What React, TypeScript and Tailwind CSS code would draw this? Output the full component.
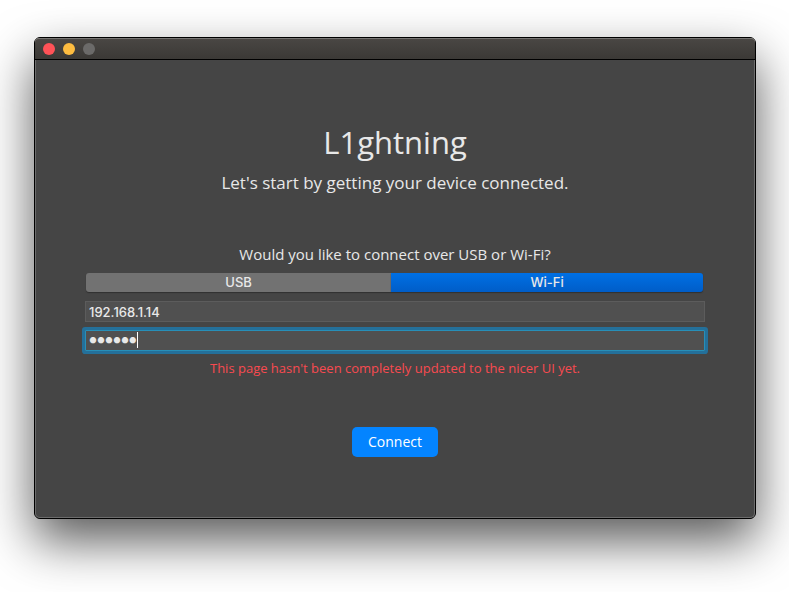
import { useState } from "react";

type Mode = "usb" | "wifi";

const DOT_WIDTH = 8;

function TitleBar() {
  return (
    <header className="flex h-[22px] items-center gap-2 rounded-t-[4px] border-b border-black bg-linear-to-b from-[#4a4744] to-[#3b3936] px-2 shadow-[inset_0_1px_0_#777573]">
      <button type="button" aria-label="Close" className="size-3 rounded-full bg-[#ff5257]" />
      <button type="button" aria-label="Minimize" className="size-3 rounded-full bg-[#fdbc40]" />
      <button type="button" aria-label="Zoom" disabled className="size-3 rounded-full bg-[#6b6a69]" />
    </header>
  );
}

export default function App() {
  const [mode, setMode] = useState<Mode>("wifi");
  const [host, setHost] = useState("192.168.1.14");
  const [password, setPassword] = useState("alpine");

  return (
    <div className="min-h-screen bg-white pt-[37px] pr-[33px] pb-[73px] pl-[34px] font-['Open_Sans',sans-serif] text-[#e8e8e8]">
      <div className="rounded-[6px] border border-black bg-[#454545] shadow-[0_22px_50px_rgba(0,0,0,0.65)]">
        <TitleBar />
        <main className="flex flex-col items-center rounded-b-[5px] border-x border-b border-[#6c6c6c] px-[49px] pt-[60px] pb-[60px]">
          <h1 className="text-[31px] leading-[44px]">L1ghtning</h1>
          <p className="mt-[7px] text-[17px] leading-6">Let's start by getting your device connected.</p>

          <form className="mt-[49px] flex w-full flex-col items-center" onSubmit={(e) => e.preventDefault()}>
            <p id="mode" className="text-[15px] leading-5">Would you like to connect over USB or Wi-Fi?</p>
            <div
              role="group"
              aria-labelledby="mode"
              className="mt-[9px] flex h-[19px] w-full pr-0.5 pl-px font-[Inter,sans-serif] text-[13px] leading-[19px] font-medium"
            >
              <button
                type="button"
                aria-pressed={mode === "usb"}
                onClick={() => setMode("usb")}
                className="flex-auto rounded-l-[3px] bg-[#727272] shadow-[0_1px_1px_#303030] aria-pressed:bg-[#0068da]"
              >
                USB
              </button>
              <button
                type="button"
                aria-pressed={mode === "wifi"}
                onClick={() => setMode("wifi")}
                className="flex-auto rounded-r-[3px] bg-[#727272] shadow-[0_1px_1px_#303030] aria-pressed:bg-linear-to-b aria-pressed:from-[#0070e4] aria-pressed:to-[#005dc8]"
              >
                Wi-Fi
              </button>
            </div>
            <input
              type="text"
              aria-label="IP address"
              value={host}
              onChange={(e) => setHost(e.target.value)}
              className="mt-[9px] h-[21px] w-full border border-[#5c5c5c] bg-[#505050] px-[3px] font-[Inter,sans-serif] text-[13px] leading-4 font-medium outline-none"
            />
            <div className="relative mt-2 h-[21px] w-full">
              <input
                type="password"
                aria-label="Password"
                autoFocus
                value={password}
                onChange={(e) => setPassword(e.target.value)}
                className="peer block h-[21px] w-full border border-[#5c5c5c] bg-[#505050] px-[3px] pb-1 font-[Inter,sans-serif] text-[20px] leading-4 font-black caret-transparent outline-none focus:rounded-[1px] focus:border-[#278fb8] focus:ring-3 focus:ring-[#24709a]"
              />
              <span
                aria-hidden="true"
                className="absolute top-0.5 hidden h-4 w-px bg-white peer-focus:block"
                style={{ left: 4 + password.length * DOT_WIDTH }}
              />
            </div>
            <p className="mt-2 text-[13px] leading-[18px] text-[#f84a50]">
              This page hasn't been completely updated to the nicer UI yet.
            </p>
            <button
              type="submit"
              className="mt-[50px] h-[30px] rounded-[5px] bg-[#0484ff] px-4 text-[14px] leading-5 text-white"
            >
              Connect
            </button>
          </form>
        </main>
      </div>
    </div>
  );
}
